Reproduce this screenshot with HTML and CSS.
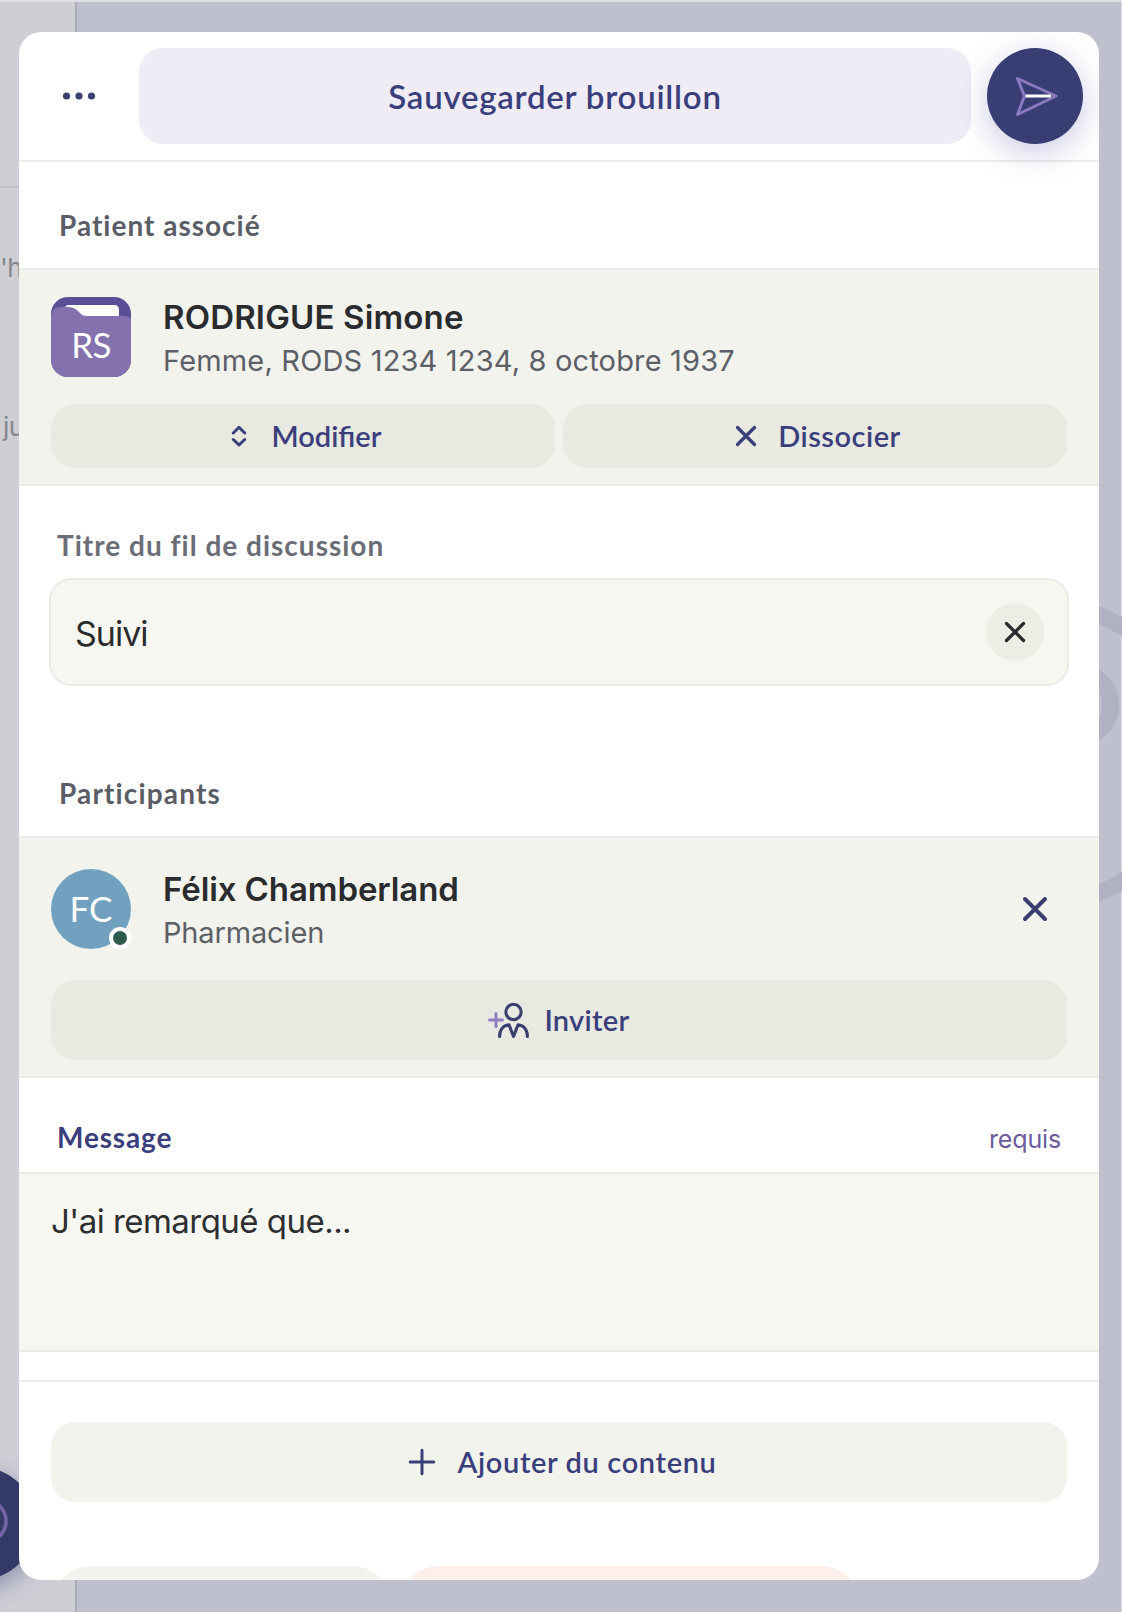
FILE: index.html
```html
<!DOCTYPE html>
<html lang="fr">
<head>
<meta charset="utf-8">
<title>Nouveau fil de discussion</title>
<link rel="stylesheet" href="styles.css">
</head>
<body>
<div class="screen">
  <div class="backdrop" aria-hidden="true">
    <div class="side">
      <div class="side-top"></div>
      <p class="side-text side-text-a">'h</p>
      <p class="side-text side-text-b">ju</p>
    </div>
    <svg class="rings" width="23" height="310" viewBox="1099 600 23 310" fill="none" stroke="#b0b2c3">
      <circle cx="1042" cy="754" r="150.3" stroke-width="16.5"/>
      <circle cx="1077" cy="705" r="33.7" stroke-width="17"/>
    </svg>
    <div class="fab"></div>
    <svg class="fab-ring" width="10" height="46" viewBox="0 0 10 46" fill="none" stroke="#7265a8" stroke-width="3.6"><circle cx="-15" cy="23" r="21"/></svg>
  </div>

  <main class="modal">
    <header class="topbar">
      <button class="more" aria-label="Plus d'options">
        <svg width="34" height="10" viewBox="0 0 34 10" fill="#3a3f6b"><circle cx="4.5" cy="5" r="3.6"/><circle cx="17" cy="5" r="3.6"/><circle cx="29.5" cy="5" r="3.6"/></svg>
      </button>
      <button class="draft"><span>Sauvegarder brouillon</span></button>
      <button class="send" aria-label="Envoyer">
        <svg width="96" height="96" viewBox="0 0 96 96" fill="none" stroke-linejoin="round" stroke-linecap="round"><path d="M30.500 30.500L69 48L30.500 66.500L37.500 48Z" stroke="#8a79c0" stroke-width="3"/><path d="M38.500 48H64" stroke="#fff" stroke-width="3" stroke-linecap="butt"/></svg>
      </button>
    </header>

    <h2 class="heading">Patient associé</h2>
    <section class="band patient">
      <div class="person">
        <div class="folder">
          <svg width="80" height="80" viewBox="0 0 80 80"><rect width="80" height="80" fill="#5a4f96"/><path d="M12 13Q14 8 18 8H63Q68 8 68 13V24H12Z" fill="#fff"/><path d="M0 19Q1 10 10 10H17Q23 10 27 14L31 18Q33 19 37 19H72Q78 19 80 22V80H0Z" fill="#8472ae"/></svg>
          <span class="initials">RS</span>
        </div>
        <div class="info">
          <p class="name name-patient">RODRIGUE Simone</p>
          <p class="detail detail-patient">Femme, RODS 1234 1234, 8 octobre 1937</p>
        </div>
      </div>
      <div class="actions">
        <button class="action act-modify"><svg class="ic-updown" width="16" height="22" viewBox="0 0 16 22" fill="none" stroke="#3a3f78" stroke-width="3" stroke-linecap="round" stroke-linejoin="round"><path d="M2.300 8L8 2.300L13.700 8M2.300 14.500L8 20L13.700 14.500"/></svg><span>Modifier</span></button>
        <button class="action act-unlink"><svg class="ic-cross" width="22" height="22" viewBox="0 0 22 22" stroke="#3a3f78" stroke-width="3.300" stroke-linecap="round"><path d="M2.500 2.500L19.500 19.500M19.500 2.500L2.500 19.500"/></svg><span>Dissocier</span></button>
      </div>
    </section>

    <label class="field-label">Titre du fil de discussion</label>
    <div class="field">
      <span class="value">Suivi</span>
      <button class="clear" aria-label="Effacer"><svg width="22" height="22" viewBox="0 0 22 22" stroke="#2a2b2d" stroke-width="3.300" stroke-linecap="round"><path d="M2.500 2.500L19.500 19.500M19.500 2.500L2.500 19.500"/></svg></button>
    </div>

    <h2 class="heading participants-heading">Participants</h2>
    <section class="band participants">
      <div class="person">
        <div class="avatar"><span class="initials-round">FC</span><i class="status"></i></div>
        <div class="info">
          <p class="name name-participant">Félix Chamberland</p>
          <p class="detail detail-role">Pharmacien</p>
        </div>
        <button class="remove" aria-label="Retirer"><svg width="26" height="26" viewBox="0 0 26 26" stroke="#3a3f70" stroke-width="4" stroke-linecap="round"><path d="M3 3L23 23M23 3L3 23"/></svg></button>
      </div>
      <button class="action invite">
        <svg width="42" height="38" viewBox="0 0 42 38" fill="none" stroke-width="3.100" stroke-linecap="round" stroke-linejoin="round"><path d="M1.600 19H14.400M8 12.500V25.500" stroke="#9180c0"/><circle cx="25.500" cy="11" r="7.700" stroke="#3a3f6e"/><path d="M11.600 35.500C11.600 29 15 24.500 21 23.800L25.500 35.500L30 23.800C36 24.500 39.400 29 39.400 35.500" stroke="#3a3f6e"/></svg>
        <span>Inviter</span>
      </button>
    </section>

    <div class="message-head"><span class="message-label">Message</span><span class="required">requis</span></div>
    <div class="message-box">J'ai remarqué que...</div>

    <section class="content">
      <button class="action add">
        <svg width="28" height="28" viewBox="0 0 28 28" stroke="#3a3f78" stroke-width="3" stroke-linecap="round"><path d="M14 2.200V25.800M2.200 14H25.800"/></svg>
        <span>Ajouter du contenu</span>
      </button>
      <div class="pills"><div class="pill pill-neutral"></div><div class="pill pill-danger"></div></div>
    </section>
  </main>
</div>
</body>
</html>
```

FILE: styles.css
```css
* { box-sizing: border-box; }
body { margin: 0; font-family: Inter, "Noto Sans", sans-serif; }
h2, p { margin: 0; }
button { border: 0; padding: 0; background: none; font: inherit; color: inherit; }
svg { display: block; flex: none; }

.screen {
  position: relative;
  width: 1122px;
  height: 1612px;
  padding: 32px 23px 32px 19px;
  overflow: hidden;
  background: #bec0cd;
}

/* Dimmed application behind the dialog */
.backdrop {
  position: absolute;
  inset: 0;
  border-top: 2px solid #dfe0e3;
  border-right: 1px solid #dcdde5;
}
.side {
  width: 77px;
  height: 100%;
  background: #cecfd5;
  border-right: 2px solid #a8aab5;
}
.side-top { height: 186px; border-bottom: 2px solid #bfc1c8; }
.side-text { font-size: 26px; line-height: 32px; color: #85878e; white-space: nowrap; }
.side-text-a { padding: 64px 0 0 0; letter-spacing: -.5px; }
.side-text-b { padding: 127px 0 0 3px; letter-spacing: -.5px; }
.rings { position: absolute; left: 1099px; top: 598px; }
.fab {
  position: absolute;
  left: -77px;
  top: 1465px;
  width: 113px;
  height: 113px;
  border-radius: 50%;
  background: #343a68;
  box-shadow: 0 8px 24px rgba(58, 63, 130, .45);
}
.fab-ring { position: absolute; left: 0; top: 1496px; }

.modal {
  position: relative;
  width: 1080px;
  height: 1548px;
  overflow: hidden;
  border-radius: 22px;
  background: #fff;
}

.topbar {
  display: flex;
  gap: 16px;
  height: 130px;
  padding: 16px 16px 0;
  border-bottom: 2px solid #ecede8;
}
.more { width: 88px; height: 96px; display: flex; align-items: center; justify-content: center; }
.draft {
  flex: 1;
  height: 96px;
  border-radius: 24px;
  background: #efecf6;
  font: 600 33px/96px Lato, sans-serif;
  letter-spacing: .75px;
  color: #3a3f7c;
}
.send {
  width: 96px;
  height: 96px;
  border-radius: 50%;
  background: #383e74;
  box-shadow: 0 8px 32px rgba(62, 66, 160, .28);
}

.heading {
  height: 106px;
  padding: 43px 0 0 40px;
  font: 700 28px/40px Lato, sans-serif;
  letter-spacing: 1px;
  color: #5a5d65;
}
.band {
  background: #f2f3ec;
  border-top: 2px solid #eaebe5;
  border-bottom: 2px solid #eaebe5;
  padding: 0 32px;
}
.person { display: flex; gap: 32px; height: 80px; }
.info { flex: 1; }
.name { font-size: 33px; line-height: 40px; font-weight: 600; color: #2a2b2e; white-space: nowrap; }
.name-patient { letter-spacing: .15px; }
.name-participant { letter-spacing: -.1px; }
.detail { margin-top: 4px; font-size: 29px; line-height: 40px; color: #5c6066; white-space: nowrap; }
.detail-patient { letter-spacing: .17px; }
.detail-role { letter-spacing: -.15px; }

.patient { height: 218px; padding-top: 27px; }
.folder { position: relative; width: 80px; height: 80px; border-radius: 17px; overflow: hidden; }
.initials {
  position: absolute;
  inset: 25px 0 auto;
  text-align: center;
  font: 400 35px/44px Lato, sans-serif;
  letter-spacing: -.8px;
  color: #fff;
}
.actions { display: flex; gap: 8px; margin-top: 27px; }
.action {
  flex: 1;
  display: flex;
  align-items: center;
  justify-content: center;
  height: 64px;
  border-radius: 24px;
  background: #e8e9e0;
  font: 600 29px/40px Lato, sans-serif;
  color: #3a3f7c;
}
.act-modify { padding-left: 6px; }
.act-unlink { padding-left: 6px; letter-spacing: .5px; }
.ic-updown { margin-right: 25px; }
.ic-cross { margin-right: 21px; }

.field-label {
  display: block;
  height: 92px;
  padding: 39px 0 0 38px;
  font: 700 28px/40px Lato, sans-serif;
  letter-spacing: 1px;
  color: #6a6d76;
}
.field {
  display: flex;
  align-items: center;
  justify-content: space-between;
  height: 108px;
  margin: 0 30px;
  padding: 0 23px;
  border: 2px solid #eaebe4;
  border-radius: 22px;
  background: #f6f7f0;
}
.value { padding: 3px 0 0 1px; font-size: 34px; line-height: 40px; letter-spacing: -1px; color: #2a2b2d; }
.clear {
  display: flex;
  align-items: center;
  justify-content: center;
  width: 58px;
  height: 58px;
  border-radius: 50%;
  background: #ecede4;
}

.participants-heading { height: 150px; padding-top: 87px; letter-spacing: 1.15px; }
.participants { height: 242px; padding-top: 31px; }
.avatar { position: relative; width: 80px; height: 80px; border-radius: 50%; background: #72a1bf; }
.initials-round {
  display: block;
  text-align: center;
  font: 400 35px/78px Lato, sans-serif;
  color: #fff;
}
.status {
  position: absolute;
  right: 0;
  bottom: 0;
  width: 22px;
  height: 22px;
  border: 4px solid #fff;
  border-radius: 50%;
  background: #2f5a4f;
}
.remove { width: 64px; display: flex; align-items: center; justify-content: center; }
.invite { width: 100%; height: 80px; margin-top: 31px; gap: 14px; letter-spacing: .3px; }

.message-head {
  display: flex;
  align-items: flex-start;
  justify-content: space-between;
  height: 94px;
  padding: 39px 38px 0 38px;
  line-height: 44px;
}
.message-label { font: 700 28px/40px Lato, sans-serif; letter-spacing: .85px; color: #3a3f7c; }
.required { font-size: 25px; letter-spacing: -.15px; color: #6c5a9c; }
.message-box {
  height: 180px;
  padding: 25px 32px;
  border-top: 2px solid #eaebe4;
  border-bottom: 2px solid #eaebe4;
  background: #f6f7f0;
  font-size: 33px;
  line-height: 44px;
  letter-spacing: -.53px;
  color: #2e2f31;
}

.content { margin-top: 28px; padding: 40px 32px 0; border-top: 2px solid #ecedec; }
.add { width: 100%; height: 80px; gap: 22px; padding-left: 6px; letter-spacing: .63px; background: #f2f3ed; }
.pills { display: flex; gap: 8px; margin-top: 64px; }
.pill { height: 80px; border-radius: 40px; }
.pill-neutral { width: 340px; background: #f2f3ed; }
.pill-danger { width: 462px; background: #fcefec; }
```
